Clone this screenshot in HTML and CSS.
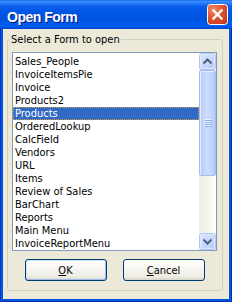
FILE: index.html
```html
<!DOCTYPE html>
<html lang="en">
<head>
<meta charset="utf-8">
<title>Open Form</title>
<link rel="stylesheet" href="styles.css">
</head>
<body>
<div class="window">
  <div class="titlebar">
    <span class="title">Open Form</span>
    <button class="close" aria-label="Close">
      <svg width="21" height="21" viewBox="0 0 21 21">
        <defs>
          <radialGradient id="cg" cx="0.3" cy="0.25" r="0.9">
            <stop offset="0" stop-color="#F08A68"/>
            <stop offset="0.5" stop-color="#E0522F"/>
            <stop offset="1" stop-color="#C23A1A"/>
          </radialGradient>
        </defs>
        <rect x="0.5" y="0.5" width="20" height="20" rx="3" fill="url(#cg)" stroke="#FFFFFF"/>
        <path d="M6.5 6.5 L14.5 14.5 M14.5 6.5 L6.5 14.5" stroke="#FFFFFF" stroke-width="2.4" stroke-linecap="square"/>
      </svg>
    </button>
  </div>
  <div class="client">
    <fieldset class="group">
      <legend class="group-label">Select a Form to open</legend>
      <div class="listbox">
        <ul class="items">
          <li>Sales_People</li>
          <li>InvoiceItemsPie</li>
          <li>Invoice</li>
          <li>Products2</li>
          <li class="selected">Products</li>
          <li>OrderedLookup</li>
          <li>CalcField</li>
          <li>Vendors</li>
          <li>URL</li>
          <li>Items</li>
          <li>Review of Sales</li>
          <li>BarChart</li>
          <li>Reports</li>
          <li>Main Menu</li>
          <li>InvoiceReportMenu</li>
        </ul>
        <div class="scrollbar">
          <div class="sb-btn">
            <svg width="17" height="17" viewBox="0 0 17 17">
              <defs>
                <linearGradient id="bg1" x1="0" y1="0" x2="1" y2="1">
                  <stop offset="0" stop-color="#DCE6FE"/>
                  <stop offset="1" stop-color="#B6CAF8"/>
                </linearGradient>
              </defs>
              <rect x="0.5" y="0.5" width="16" height="16" rx="2" fill="url(#bg1)" stroke="#B2C6F4"/>
              <rect x="1.5" y="1.5" width="14" height="14" rx="1.5" fill="none" stroke="#E8EFFE" stroke-opacity="0.7"/>
              <path d="M4.5 10.5 L8.5 6.5 L12.5 10.5" fill="none" stroke="#4D6185" stroke-width="2"/>
            </svg>
          </div>
          <div class="sb-track">
            <div class="sb-thumb">
              <svg width="8" height="8" viewBox="0 0 8 8">
                <path d="M0 0.5 H7 M0 2.5 H7 M0 4.5 H7 M0 6.5 H7" stroke="#EEF4FE"/>
                <path d="M1 1.5 H8 M1 3.5 H8 M1 5.5 H8 M1 7.5 H8" stroke="#8CACEE"/>
              </svg>
            </div>
          </div>
          <div class="sb-btn">
            <svg width="17" height="17" viewBox="0 0 17 17">
              <rect x="0.5" y="0.5" width="16" height="16" rx="2" fill="url(#bg1)" stroke="#B2C6F4"/>
              <rect x="1.5" y="1.5" width="14" height="14" rx="1.5" fill="none" stroke="#E8EFFE" stroke-opacity="0.7"/>
              <path d="M4.5 6.5 L8.5 10.5 L12.5 6.5" fill="none" stroke="#4D6185" stroke-width="2"/>
            </svg>
          </div>
        </div>
      </div>
      <div class="actions">
        <button class="btn btn-default"><u>O</u>K</button>
        <button class="btn"><u>C</u>ancel</button>
      </div>
    </fieldset>
  </div>
</div>
</body>
</html>
```
FILE: styles.css
```css
html, body {
  margin: 0;
  padding: 0;
  background: #ffffff;
}

body {
  width: 232px;
  height: 302px;
  overflow: hidden;
  font-family: "DejaVu Sans Condensed", "DejaVu Sans", "Liberation Sans", sans-serif;
  font-size: 11px;
}

.window {
  width: 232px;
  height: 302px;
  display: flex;
  flex-direction: column;
  background: #0055E5;
  box-shadow: inset 1px 0 0 #0838C8, inset -1px 0 0 #0030B0, inset 0 -1px 0 #0030B0;
}

.titlebar {
  flex: none;
  height: 29px;
  display: flex;
  align-items: center;
  justify-content: space-between;
  padding: 0 4px 0 7px;
  background: linear-gradient(180deg,
    #0A5DE8 0px, #3B8FFF 1px, #2A80F8 3px, #0A60EE 6px,
    #0055E5 12px, #0053E1 20px, #005EF5 25px, #0058EA 27px, #0042CC 29px);
}

.title {
  margin-top: 4px;
  color: #ffffff;
  font-family: "Liberation Sans", Arial, sans-serif;
  font-weight: bold;
  font-size: 14px;
  letter-spacing: -0.5px;
  text-shadow: 1px 1px 0 #0A1883;
}

.close {
  width: 21px;
  height: 21px;
  padding: 0;
  margin: 0;
  border: 0;
  background: none;
  display: block;
}

.close svg {
  display: block;
}

.client {
  flex: 1;
  display: flex;
  margin: 0 3px 3px;
  padding: 4px 6px 8px 4px;
  background: #ECE9D8;
}

.group {
  flex: 1;
  min-width: 0;
  margin: 0;
  padding: 6px 5px 9px 4px;
  border: 1px solid #D0D0BF;
  border-radius: 3px;
}

.group-label {
  margin-left: -2px;
  padding: 0 1px;
  line-height: 13px;
  color: #000000;
}

.listbox {
  width: 205px;
  height: 199px;
  box-sizing: border-box;
  display: flex;
  border: 1px solid #7F9DB9;
  background: #ffffff;
}

.items {
  flex: 1;
  min-width: 0;
  margin: 0;
  padding: 2px 0 0;
  list-style: none;
  line-height: 13px;
  color: #000000;
}

.items li {
  height: 13px;
  padding-left: 2px;
  white-space: nowrap;
}

.items li.selected {
  background: #316AC5;
  color: #ffffff;
  outline: 1px dotted #D09A40;
  outline-offset: -1px;
}

.scrollbar {
  flex: none;
  width: 17px;
  display: flex;
  flex-direction: column;
}

.sb-btn {
  flex: none;
  height: 17px;
}

.sb-btn svg {
  display: block;
}

.sb-track {
  flex: 1;
  background: linear-gradient(to right, #EEEDE5, #FDFDFA);
}

.sb-thumb {
  height: 106px;
  box-sizing: border-box;
  display: flex;
  align-items: center;
  justify-content: center;
  border: 1px solid #A4BBEF;
  border-radius: 2px;
  background: linear-gradient(to right, #B8CCF9, #CCDBFE 45%, #C2D4FB 80%, #B4C9F7);
  box-shadow: inset 1px 1px 0 #E4ECFE;
}

.sb-thumb svg {
  display: block;
}

.actions {
  display: flex;
  justify-content: center;
  gap: 16px;
  margin-top: 8px;
}

.btn {
  width: 82px;
  height: 22px;
  margin: 0;
  padding: 0;
  border: 1px solid #003C74;
  border-radius: 3px;
  background: linear-gradient(180deg, #FFFFFF 0%, #F5F4EF 50%, #ECEBE4 85%, #D8D3C8 100%);
  font-family: inherit;
  font-size: 11px;
  color: #000000;
}

.btn-default {
  box-shadow: inset 1px 1px 0 #CEE7FF, inset -1px -1px 0 #9DB9EB;
}

.btn u {
  text-decoration: underline;
}
```
